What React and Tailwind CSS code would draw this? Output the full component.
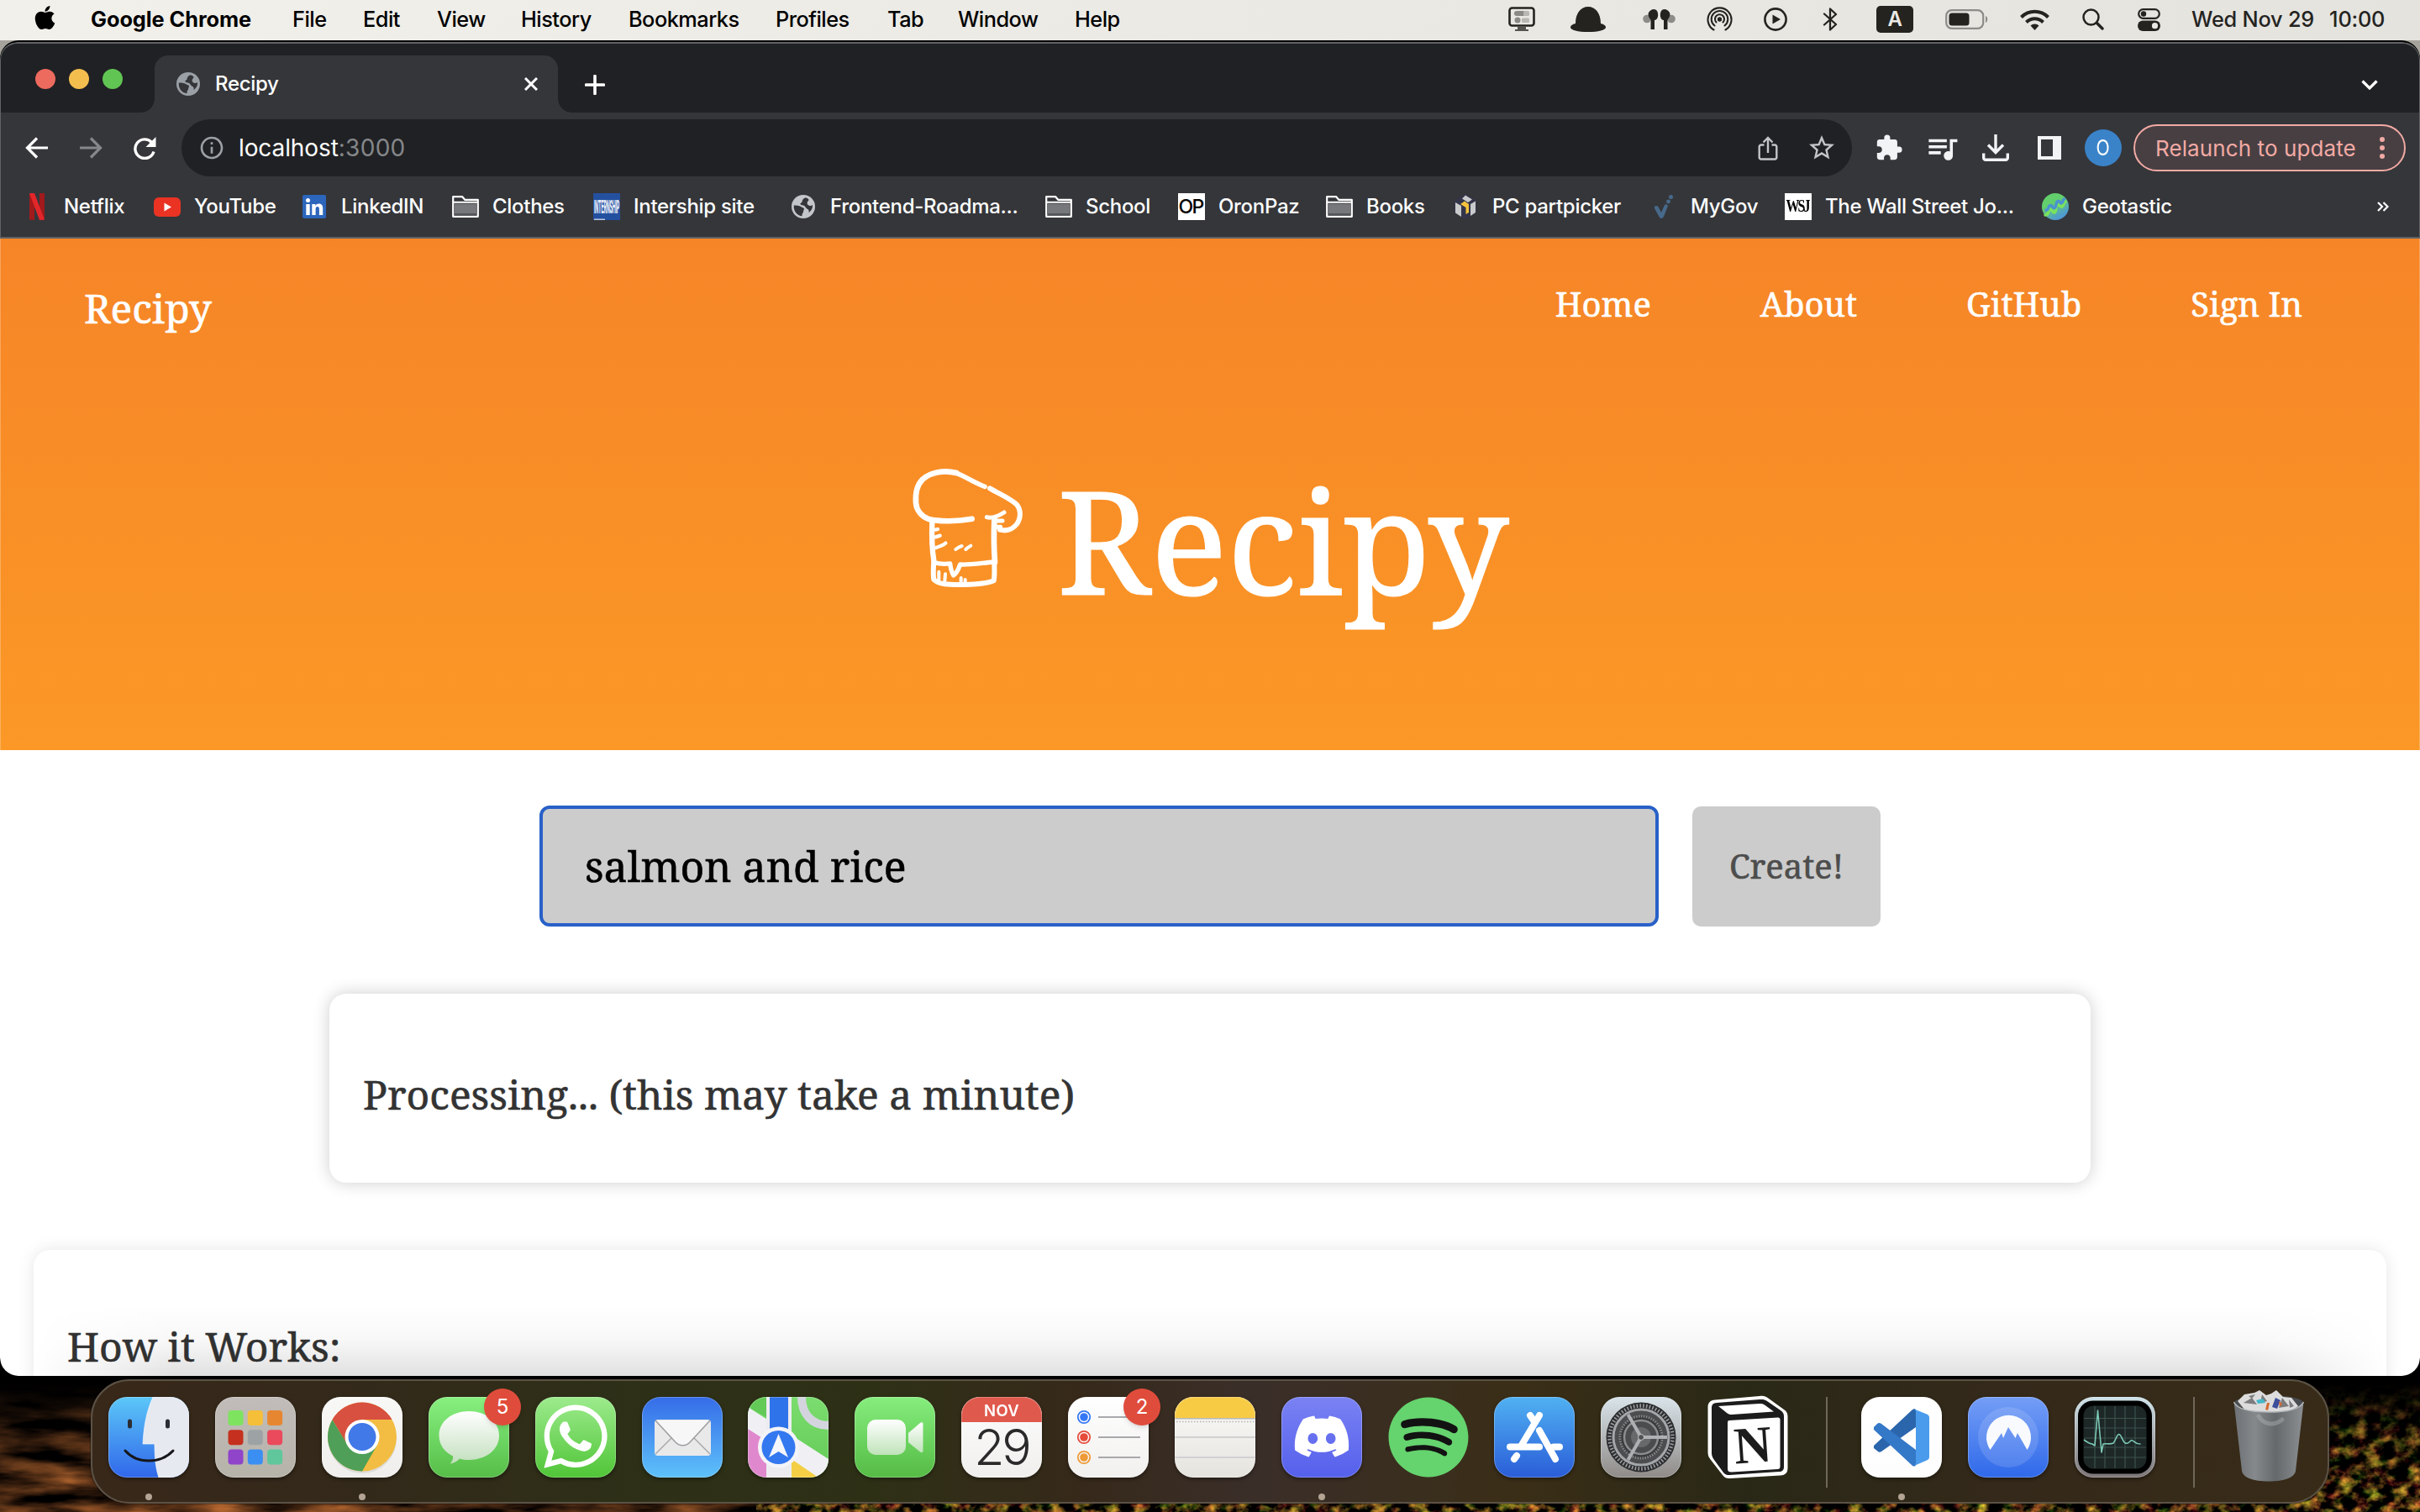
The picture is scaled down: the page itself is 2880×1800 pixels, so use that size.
import React from "react";
import { FaApple, FaWhatsapp, FaDiscord, FaSpotify } from "react-icons/fa";
import { MdExtension, MdQueueMusic, MdInfoOutline, MdStarOutline } from "react-icons/md";

const SERIF = "font-['Noto_Serif',serif]";

/* ---------- macOS menu bar ---------- */

const menus = [
  ["File", "w-[84px]"],
  ["Edit", "w-[88px]"],
  ["View", "w-[100px]"],
  ["History", "w-[128px]"],
  ["Bookmarks", "w-[175px]"],
  ["Profiles", "w-[133px]"],
  ["Tab", "w-[84px]"],
  ["Window", "w-[139px]"],
  ["Help", "w-[80px]"],
];

function StatusIcons() {
  const c = "#24231f";
  return (
    <div className="flex items-center">
      <svg className="w-8 h-[30px]" viewBox="0 0 32 30">
        <rect x="1.5" y="1.5" width="29" height="21" rx="3" fill="none" stroke={c} strokeWidth="2.6" />
        <rect x="7" y="5" width="14" height="6" rx="3" fill="#8b8a86" />
        <rect x="18" y="5" width="7" height="6" rx="1.5" fill="#b9b8b3" />
        <circle cx="11" cy="16" r="3.5" fill="#8b8a86" />
        <rect x="16" y="13.500" width="9" height="5.500" rx="1.5" fill="#b9b8b3" />
        <path d="M11 24h10v3h3v2H8v-2h3z" fill="#55544f" />
      </svg>
      <svg className="ml-[42px] w-[42px] h-[30px]" viewBox="0 0 42 30" fill={c}>
        <path d="M6 20C6 8 12 0 21 0s15 8 15 20c4 1 6 2.500 6 4.500C42 28 33 30 21 30S0 28 0 24.500C0 22.500 2 21 6 20z" />
      </svg>
      <svg className="ml-[44px] w-[39px] h-6" viewBox="0 0 39 24">
        <circle cx="5" cy="11.500" r="4.800" fill="#8d8c88" />
        <circle cx="34" cy="11.500" r="4.800" fill="#8d8c88" />
        <path d="M7 4c3-5 9-5 10.500-1s.5 10-3.500 10v11H9.500V13C8 10 5.500 8 7 4z" fill={c} />
        <path d="M32 4c-3-5-9-5-10.500-1s-.5 10 3.500 10v11h4.500V13C31 10 33.500 8 32 4z" fill={c} />
      </svg>
      <svg className="ml-[37px] w-[31px] h-[30px]" viewBox="0 0 31 30" fill="none" stroke={c} strokeWidth="2.1" strokeLinecap="round">
        <path d="M8.500 27.500a14 14 0 1 1 14 0" />
        <path d="M9.500 22.500a9.800 9.800 0 1 1 12 0" />
        <path d="M11.500 18.500a5.500 5.500 0 1 1 8 0" />
        <circle cx="15.500" cy="15" r="1.600" fill={c} />
      </svg>
      <svg className="ml-[37px] w-7 h-7" viewBox="0 0 28 28">
        <circle cx="14" cy="14" r="12.600" fill="none" stroke={c} strokeWidth="2.6" />
        <path d="M10.500 8.500v11l9.500-5.500z" fill={c} />
      </svg>
      <svg className="ml-[42px] w-[19px] h-7" viewBox="0 0 19 28" fill="none" stroke={c} strokeWidth="2.300" strokeLinejoin="round" strokeLinecap="round">
        <path d="M2 7.500l14 12.500-7 6.500v-25l7 6.500L2 20.500" />
      </svg>
      <div className="ml-[45px] w-[44px] h-8 rounded-[5px] bg-[#24231f] text-[#eceae5] text-[24px] font-semibold leading-8 text-center">A</div>
      <svg className="ml-[38px] w-[51px] h-[24px]" viewBox="0 0 51 24">
        <rect x="1.200" y="1.200" width="44" height="21.600" rx="6.500" fill="none" stroke="#8d8c88" strokeWidth="2.200" />
        <rect x="4.500" y="4.500" width="24" height="15" rx="3.500" fill={c} />
        <path d="M48 8c3 1 3 7 0 8z" fill="#8d8c88" />
      </svg>
      <svg className="ml-[38px] w-[35px] h-[25px]" viewBox="0 0 35 25" fill="none" stroke={c} strokeWidth="4">
        <path d="M1.500 9.500a22.500 22.500 0 0 1 32 0" />
        <path d="M7.500 15.500a14 14 0 0 1 20 0" />
        <path d="M17.500 25l-5-5.500a7 7 0 0 1 10 0z" fill={c} stroke="none" />
      </svg>
      <svg className="ml-[39px] w-[26px] h-[26px]" viewBox="0 0 26 26" fill="none" stroke={c} strokeLinecap="round">
        <circle cx="10.500" cy="10.500" r="9" strokeWidth="2.500" />
        <path d="M17.500 17.500l6.500 6.500" strokeWidth="3.400" />
      </svg>
      <svg className="ml-[40px] w-[27px] h-[27px]" viewBox="0 0 27 27">
        <rect x="1.200" y="1.200" width="24.600" height="10.600" rx="5.300" fill="none" stroke={c} strokeWidth="2.200" />
        <circle cx="7" cy="6.500" r="3.200" fill={c} />
        <rect x="0" y="14.500" width="27" height="12.500" rx="6.200" fill={c} />
        <circle cx="20.500" cy="20.700" r="3.600" fill="#e8e7e2" />
      </svg>
    </div>
  );
}

function MenuBar() {
  return (
    <div className="h-12 shrink-0 flex items-center bg-linear-to-r from-[#f1f0eb] to-[#e4e3de] text-[25.300px] font-medium tracking-[-0.5px] text-black pb-[2px]">
      <FaApple className="ml-[38px] w-[31px] h-[32px] -mt-[5px]" />
      <div className="ml-[39px] w-[240px] font-bold whitespace-nowrap tracking-[-0.050px]">Google Chrome</div>
      {menus.map(([m, w]) => (
        <div key={m} className={w}>{m}</div>
      ))}
      <div className="ml-auto flex items-center">
        <StatusIcons />
        <div className="ml-[37px] w-[272px] flex gap-[18px] text-[#24231f] whitespace-nowrap tracking-[-0.200px]">
          <span>Wed Nov 29</span>
          <span>10:00</span>
        </div>
      </div>
    </div>
  );
}

/* ---------- Browser chrome ---------- */

function Globe({ className, fill, bg = "#35363a" }) {
  return (
    <svg className={className} viewBox="0 0 28 28">
      <circle cx="14" cy="14" r="14" fill={fill} />
      <path d="M2.800 12.500c3 0 6 0 8.500 1.500 1 1.300 2.500.8 3.700 2.300 0 1.700-1.200 2.700-1 4.400-1 1-1.800 2.300-1.400 4.600C6.500 24.800 2 19 2.800 12.500z" fill={bg} />
      <path d="M16.500 3.200c-1.800.8-3.500 2-3.800 4 .3 2-1.900 2.100-2.500 3.600 1 2 3.500 1.400 5 2.200 1.600 1 1.800 3 3.600 3.800 1.800.5 2.200 2.500 1.700 4.500 3-2.500 5-5.500 4.500-9.300-2 1.500-4.500 1-5.800-.6-1.400-1.500-.2-3.500 1-4.600C21.500 5.500 19 3.500 16.500 3.200z" fill={bg} />
    </svg>
  );
}

function TabStrip() {
  return (
    <div className="h-[82px] flex items-center bg-[#202124]">
      <div className="ml-[41px] mt-[2px] flex gap-4">
        <div className="size-6 rounded-full bg-[#ed6a5e]" />
        <div className="size-6 rounded-full bg-[#f4be4f]" />
        <div className="size-6 rounded-full bg-[#61c554]" />
      </div>
      <div className="ml-[22px] self-end size-4 bg-[radial-gradient(circle_at_0_0,#202124_15.500px,#35363a_16px)]" />
      <div className="self-end w-[480px] h-[68px] rounded-t-[16px] bg-[#35363a] flex items-center px-[26px] text-white text-[24px] font-medium">
        <Globe className="w-7 h-7" fill="#9aa0a6" />
        <span className="ml-[18px] tracking-[-0.3px]">Recipy</span>
        <svg className="ml-auto -mr-[2px] size-4" viewBox="0 0 16 16" stroke="#fff" strokeWidth="3">
          <path d="M1 1l14 14M15 1L1 15" />
        </svg>
      </div>
      <div className="self-end size-4 bg-[radial-gradient(circle_at_100%_0,#202124_15.500px,#35363a_16px)]" />
      <svg className="ml-4 mt-[15px] size-6" viewBox="0 0 24 24" stroke="#fff" strokeWidth="3.600" strokeLinecap="round">
        <path d="M12 1.500v21M1.500 12h21" />
      </svg>
      <svg className="ml-auto mr-[49px] mt-[16px] w-[20px] h-[12px]" viewBox="0 0 20 12" fill="none" stroke="#fff" strokeWidth="3.200">
        <path d="M1.500 1.500l8.500 8.500 8.500-8.500" />
      </svg>
    </div>
  );
}

function Toolbar() {
  return (
    <div className="h-[84px] flex items-center bg-[#35363a] text-white">
      <svg className="ml-[29px] w-[27px] h-[26px]" viewBox="0 0 27 26" fill="none" stroke="#fff" strokeWidth="3.200">
        <path d="M27 13H3M14 1.500L2.500 13 14 24.500" />
      </svg>
      <svg className="ml-[38px] w-[27px] h-[26px]" viewBox="0 0 27 26" fill="none" stroke="#85878a" strokeWidth="3.200">
        <path d="M0 13h24M13 1.500L24.500 13 13 24.500" />
      </svg>
      <svg className="ml-[36px] w-[28px] h-[27px]" viewBox="0 0 28 27">
        <path d="M22.500 6.500A11.300 11.300 0 1 0 25 17.500" fill="none" stroke="#fff" strokeWidth="3.400" />
        <path d="M27.500 0v12h-12z" fill="#fff" />
      </svg>
      <div className="ml-[30px] w-[1988px] h-[68px] rounded-full bg-[#202124] flex items-center pl-[20px] pr-[18px]">
        <MdInfoOutline className="size-8 text-[#9aa0a6]" />
        <div className="ml-[16px] text-[28px] text-white whitespace-nowrap tracking-[-0.1px]">
          localhost<span className="text-[#85878a] tracking-[0.300px]">:3000</span>
        </div>
        <svg className="ml-auto w-6 h-[29px]" viewBox="0 0 24 29" fill="none" stroke="#c3c5c8" strokeWidth="2.400">
          <path d="M7.500 10.500H4A2.200 2.200 0 0 0 1.700 12.700v12.500A2.200 2.200 0 0 0 4 27.500h16a2.200 2.200 0 0 0 2.300-2.300V12.700A2.200 2.200 0 0 0 20 10.500h-3.500M12 20V3M6.500 7.500L12 2l5.500 5.500" />
        </svg>
        <MdStarOutline className="ml-[34px] size-9 text-[#c3c5c8]" />
      </div>
      <div className="ml-[27px] flex items-center text-[#f1f3f4]">
        <MdExtension className="size-[34px]" />
        <MdQueueMusic className="ml-[25px] size-[43px]" />
        <svg className="ml-[26px] w-8 h-[32px]" viewBox="0 0 32 32" fill="none" stroke="currentColor" strokeWidth="3.400">
          <path d="M16 0v21M7 12.500l9 9 9-9M1.700 22.500V28a2.300 2.300 0 0 0 2.300 2.300h24a2.300 2.300 0 0 0 2.300-2.300v-5.500" />
        </svg>
        <svg className="ml-[34px] w-[28px] h-[28px]" viewBox="0 0 28 28">
          <path d="M0 0h28v28H0zM4 4v20h14V4z" fill="currentColor" fillRule="evenodd" />
        </svg>
        <div className="ml-[28px] size-[44px] rounded-full bg-[#3a83c9] text-white text-[25px] leading-[44px] text-center"><span className="inline-block scale-x-85">O</span></div>
        <div className="ml-[14px] w-[324px] h-[56px] rounded-full border-2 border-[#f2aaa4] bg-[#483f43] text-[#f2aaa4] text-[26px] flex items-center pl-[24px]">
          <span className="whitespace-nowrap tracking-[0.100px]">Relaunch to update</span>
          <svg className="ml-auto mr-[23px] w-[6px] h-[26px]" viewBox="0 0 6 26" fill="#f2aaa4">
            <circle cx="3" cy="3" r="3" />
            <circle cx="3" cy="13" r="3" />
            <circle cx="3" cy="23" r="3" />
          </svg>
        </div>
      </div>
    </div>
  );
}

function Folder() {
  return (
    <svg className="w-8 h-[26px]" viewBox="0 0 32 26">
      <path d="M1.200 24.800V1.200h11l3 3.600h15.600v20z" fill="none" stroke="#fff" strokeWidth="2.200" strokeLinejoin="round" />
      <path d="M2 7.800h28" stroke="#fff" strokeWidth="2" />
      <path d="M3 9.500h26v12H3z" fill="#77787b" />
      <path d="M3 21.500h26v2H3z" fill="#55565a" />
    </svg>
  );
}

const bookmarkIcons = {
  netflix: (
    <svg className="w-[20px] h-8" viewBox="0 0 20 32">
      <path d="M1 0h6v32l-6-.5z" fill="#a11a1c" />
      <path d="M13 0h6v31.500L13 32z" fill="#a11a1c" />
      <path d="M1 0h6l12 31.500L13 32z" fill="#e3262a" />
    </svg>
  ),
  youtube: (
    <svg className="w-8 h-[23px]" viewBox="0 0 32 23">
      <rect width="32" height="23" rx="6" fill="#ea3323" />
      <path d="M12.500 6.500v10l8.500-5z" fill="#fff" />
    </svg>
  ),
  linkedin: (
    <svg className="w-7 h-7" viewBox="0 0 28 28">
      <rect width="28" height="28" rx="2" fill="#2c66bc" />
      <circle cx="6.500" cy="6.500" r="2.500" fill="#fff" />
      <path d="M4.300 11h4.400v13H4.300zM11.300 11h4v2c1-1.600 2.500-2.400 4.300-2.400 3.300 0 4.600 2.200 4.600 5.700V24h-4.300v-7c0-1.800-.6-2.900-2-2.900-1.600 0-2.300 1.200-2.300 3V24h-4.300z" fill="#fff" />
    </svg>
  ),
  folder: <Folder />,
  internship: (
    <svg className="w-8 h-8" viewBox="0 0 32 32">
      <rect width="32" height="32" fill="#2450a0" />
      <text x="16" y="10.200" transform="scale(1 2.400)" textAnchor="middle" textLength="30" lengthAdjust="spacingAndGlyphs" fontFamily="Inter" fontWeight="800" fontSize="9" fill="#e6ecf7">INTERNSHIP</text>
      <rect x="1" y="30.500" width="13" height="1.500" fill="#b9c8e4" />
    </svg>
  ),
  globe: <Globe className="w-7 h-7" fill="#c3c7cb" />,
  op: <div className="w-8 h-8 bg-white text-black text-[23px] leading-8 tracking-[-1.800px] text-center"><span className="-ml-[2px]">OP</span></div>,
  pc: (
    <svg className="w-[28px] h-[30px]" viewBox="0 0 28 30">
      <path d="M14 0l13 8v14l-13 8-13-8V8z" fill="#34354a" />
      <path d="M2 10l7 4v13l-7-4.500zM14 1.500l8 5-5 3.500-7-4.500zM20 12l6-3.500V22l-6 4z" fill="#c9cacb" />
      <path d="M8 12l5-3.500 5 3.500v10l-3.500 2v-8z" fill="#f3c33c" />
    </svg>
  ),
  mygov: (
    <svg className="w-6 h-7" viewBox="0 0 24 28" fill="#47698a">
      <path d="M1 14c2-2 4-1 5 1l3 6 4-9c1-1 3-1 4 1l-5 13c-1.500 2.500-4.500 2.500-5.500 0L1 16z" />
      <circle cx="17.500" cy="8" r="2.400" />
      <circle cx="20.500" cy="2.500" r="2.500" />
    </svg>
  ),
  wsj: (
    <div className="w-8 h-8 bg-white text-black font-['Liberation_Serif',serif] font-bold text-[16px] leading-8 tracking-[-2px] text-center">
      <span className="inline-block scale-y-125 -ml-[2px]">WSJ</span>
    </div>
  ),
  geo: (
    <svg className="w-8 h-8" viewBox="0 0 32 32">
      <defs>
        <linearGradient id="geo" x1="0.200" y1="0" x2="0.800" y2="1"><stop offset="0.350" stopColor="#62cf6c" /><stop offset="0.850" stopColor="#4f9bd0" /></linearGradient>
      </defs>
      <circle cx="16" cy="16" r="16" fill="url(#geo)" />
      <path d="M4 26c5 0 3-6 6-7s2 5 5 4 0-9 4-9 2 3 5 2 1-5 4-6" fill="none" stroke="#7be35c" strokeWidth="3.500" strokeLinecap="round" />
      <path d="M5 20c4 0 2-5 5-5.500s2 4 5 3 1-8 4.500-8 1.500 3 4 2 1-3.500 3-4.500" fill="none" stroke="#4a93cf" strokeWidth="3.500" strokeLinecap="round" />
    </svg>
  ),
};

const bookmarks = [
  ["netflix", "Netflix", "w-[155px]"],
  ["youtube", "YouTube", "w-[175px]"],
  ["linkedin", "LinkedIN", "w-[180px]"],
  ["folder", "Clothes", "w-[168px]"],
  ["internship", "Intership site", "w-[234px]"],
  ["globe", "Frontend-Roadma...", "w-[304px]"],
  ["folder", "School", "w-[158px]"],
  ["op", "OronPaz", "w-[176px]"],
  ["folder", "Books", "w-[150px]"],
  ["pc", "PC partpicker", "w-[236px]"],
  ["mygov", "MyGov", "w-[160px]"],
  ["wsj", "The Wall Street Jo...", "w-[306px]"],
  ["geo", "Geotastic", "w-[200px]"],
];

function BookmarksBar() {
  return (
    <div className="h-[66px] pb-[8px] flex items-center bg-[#35363a] border-b-2 border-[#5f6165] box-border pl-[27px] text-white text-[24px] font-medium tracking-[-0.300px]">
      {bookmarks.map(([icon, name, w]) => (
        <div key={name} className={`${w} shrink-0 flex items-center`}>
          <div className="w-8 h-8 flex items-center justify-center shrink-0">{bookmarkIcons[icon]}</div>
          <span className="ml-4 whitespace-nowrap">{name}</span>
        </div>
      ))}
      <svg className="ml-auto mr-[36px] w-[14px] h-[12px]" viewBox="0 0 14 12" fill="none" stroke="#fff" strokeWidth="2.200">
        <path d="M1 1l5 5-5 5M7.500 1l5 5-5 5" />
      </svg>
    </div>
  );
}

/* ---------- Web page ---------- */

function ChefHat() {
  return (
    <svg className="w-[160px] h-[180px]" viewBox="0 0 480 540" fill="none" stroke="#fff" strokeLinecap="round" strokeLinejoin="round">
      <path d="M205 69C160 58 112 66 84 92 60 116 58 150 60 176c2 26 20 48 46 58 40 10 105 8 154 -1" strokeWidth="20" />
      <path d="M200 68c35 12 65 35 106 50" strokeWidth="17" />
      <path d="M324 124c30 18 73 36 96 58 16 20 15 50 0 70-16 20-35 26-60 20" strokeWidth="18" />
      <path d="M313 227c15 4 35 0 62-17" strokeWidth="15" />
      <path d="M347 240h22M347 262h15" strokeWidth="15" />
      <path d="M118 246c-2 45-1 90 6 136" strokeWidth="19" />
      <path d="M340 236c-2 50-2 100 2 152" strokeWidth="20" />
      <path d="M130 272l8-2M130 298l16-5M132 336c12-4 24-8 34-16" strokeWidth="13" />
      <path d="M202 342c8-6 14-10 22-12M238 342c6-6 12-10 18-13" strokeWidth="12" />
      <path d="M124 384c-2 28-3 50 0 66 20 20 60 18 110 18 45-1 80-4 104-14 4-20 2-40 2-66" strokeWidth="18" />
      <path d="M130 390c18 6 32 4 52 3 2 16 4 28 12 42 12-8 18-22 24-39 40 2 80-6 120-9" strokeWidth="16" />
      <path d="M142 422v28M165 430l-2 24M221 444v14M236 450v8" strokeWidth="12" />
    </svg>
  );
}

function Hero() {
  return (
    <div className="h-[609px] shrink-0 bg-linear-to-b from-[#f68527] to-[#fb9826] border-x border-white/25 text-white">
      <div className="h-[160px] flex items-center justify-between pl-[99px] pr-[139px]">
        <div className="mt-[5px] text-[48px] leading-none">Recipy</div>
        <nav className="mb-[5px] flex gap-[130px] text-[40px] leading-none">
          <a>Home</a>
          <a>About</a>
          <a>GitHub</a>
          <a>Sign In</a>
        </nav>
      </div>
      <div className="pt-[96px] pl-[1069px] flex items-start">
        <ChefHat />
        <h1 className="ml-[28px] mt-[17px] text-[170px] leading-[170px] [-webkit-text-stroke:1.200px]">Recipy</h1>
      </div>
    </div>
  );
}

function Page() {
  return (
    <div className={`${SERIF} flex-1 flex flex-col bg-white overflow-hidden relative [-webkit-text-stroke:0.600px]`}>
      <Hero />
      <div className="mt-[66px] pl-[642px] flex items-center gap-[40px]">
        <div className="w-[1332px] h-[144px] rounded-[12px] border-4 border-[#2860c8] bg-[#ccc] flex items-center pl-[50px] text-[50px] leading-none text-black">
          salmon and rice
        </div>
        <div className="w-[224px] h-[143px] rounded-[10px] bg-[#ccc] flex items-center justify-center text-[40px] leading-none text-[#4d4d4d]">
          Create!
        </div>
      </div>
      <div className="mt-[80px] ml-[392px] w-[2096px] h-[225px] shrink-0 rounded-[20px] bg-white shadow-[0_0_20px_rgba(0,0,0,0.200)] pt-[96px] pl-[40px] text-[48px] leading-none text-[#333]">
        Processing... (this may take a minute)
      </div>
      <div className="mt-[80px] mx-[40px] h-[300px] shrink-0 rounded-[20px] bg-white shadow-[0_0_20px_rgba(0,0,0,0.100)] pt-[91px] pl-[40px] text-[48px] leading-none text-[#333]">
        How it Works:
      </div>
      <div className="absolute bottom-0 left-[40px] right-[40px] h-[84px] bg-linear-to-b from-black/0 via-black/3 to-black/12 mask-x-from-94% mask-x-to-100%" />
    </div>
  );
}

/* ---------- Dock ---------- */

function Grad({ id, from, to }) {
  return (
    <linearGradient id={id} x1="0" y1="0" x2="0" y2="1">
      <stop offset="0" stopColor={from} />
      <stop offset="1" stopColor={to} />
    </linearGradient>
  );
}

function Tile({ id, from, to, children }) {
  return (
    <svg className="size-24 drop-shadow-[0_2px_2px_rgba(0,0,0,0.400)]" viewBox="0 0 96 96">
      <defs>
        <Grad id={id} from={from} to={to} />
        <clipPath id={`${id}-clip`}><rect width="96" height="96" rx="22" /></clipPath>
      </defs>
      <g clipPath={`url(#${id}-clip)`}>
        <rect width="96" height="96" fill={`url(#${id})`} />
        {children}
      </g>
      <rect x="0.500" y="0.500" width="95" height="95" rx="21.500" fill="none" stroke="#fff" strokeOpacity="0.250" />
    </svg>
  );
}

const Finder = () => (
  <Tile id="finder" from="#5cc7f8" to="#3067ea">
    <path d="M53 0C45 18 42 36 41 56h14c0 16 1 28 5 40h36V0z" fill="#e6e9f0" />
    <path d="M53 0C45 18 42 36 41 56h14c0 16 1 28 5 40" fill="none" stroke="#fff" strokeWidth="1" opacity="0.600" />
    <path d="M25.500 29v6M70.500 29v6" stroke="#2c2d33" strokeWidth="5" strokeLinecap="round" />
    <path d="M20 64c14 16 42 16 57 0" fill="none" stroke="#16171b" strokeWidth="3" strokeLinecap="round" />
  </Tile>
);

const Launchpad = () => {
  const colors = ["#7ee35f", "#f6bf3a", "#e78631", "#c5301f", "#9da3a5", "#ea4a5c", "#8f44c9", "#3b8ff2", "#5fc79b"];
  return (
    <Tile id="launch" from="#c1bcb9" to="#b6b3a9">
      {colors.map((c, i) => (
        <rect key={c} x={15.500 + (i % 3) * 23.300} y={16 + Math.floor(i / 3) * 23.300} width="18" height="18" rx="4" fill={c} />
      ))}
    </Tile>
  );
};

const Chrome = () => (
  <Tile id="chrome" from="#f8f8f7" to="#efeeec">
    <circle cx="48" cy="50" r="41" fill="#000" opacity="0.080" />
    <circle cx="48" cy="47.500" r="41" fill="#f2bd42" />
    <path d="M48 27h35.500A41 41 0 0 0 12.500 27L30.500 57z" fill="#d8503f" />
    <path d="M12.500 27A41 41 0 0 0 48 88.500L65.500 58 48 62 30.500 57z" fill="#4f9f58" />
    <circle cx="48" cy="47.500" r="20.500" fill="#fff" />
    <circle cx="48" cy="47.500" r="16.500" fill="#4179e8" />
  </Tile>
);

const Messages = () => (
  <Tile id="msg" from="#87f07f" to="#56bd48">
    <defs><Grad id="msgb" from="#fff" to="#c3dfbe" /></defs>
    <path d="M48 17c20 0 36 12 36 29S68 75 48 75c-4 0-8-.5-11-1.500-3 3-7 5.500-11.500 6 3-3 4-6 3.500-9C18 65 12.500 56 12.500 46 12.500 29 28 17 48 17z" fill="url(#msgb)" />
  </Tile>
);

const WhatsApp = () => (
  <Tile id="wa" from="#9deb8d" to="#50c537">
    <foreignObject x="5" y="4" width="86" height="86"><FaWhatsapp className="size-[86px] text-white" /></foreignObject>
  </Tile>
);

const Mail = () => (
  <Tile id="mail" from="#356ce8" to="#5ec2fa">
    <rect x="15" y="27" width="67" height="43" rx="4" fill="#e9e9ea" />
    <path d="M16 68l20-20M81 68L61 48" stroke="#a9a9ab" strokeWidth="1.500" />
    <path d="M16 28l24 26c5 5 12 5 17 0l24-26" fill="#f7f7f7" stroke="#9d9da0" strokeWidth="1.500" />
  </Tile>
);

const Maps = () => (
  <Tile id="maps" from="#7bdd6f" to="#62c955">
    <path d="M0 0h22v24L0 12z" fill="#63c957" />
    <path d="M0 12l96 62v22H80L0 40z" fill="#f0f0f4" />
    <path d="M0 38l22 14v44H0z" fill="#e088cd" />
    <path d="M52 74l32 22H52z" fill="#f4cf45" />
    <path d="M64 0c0 20 12 34 32 34" fill="none" stroke="#d4d4df" strokeWidth="10" />
    <rect x="22" width="30" height="96" fill="#ececf0" />
    <rect x="26" width="22" height="50" fill="#2f73ea" />
    <circle cx="36.500" cy="60" r="24.500" fill="#f3f4f8" />
    <circle cx="36.500" cy="60" r="20" fill="#3478f0" />
    <path d="M36.500 44l11.500 28-11.500-7-11.500 7z" fill="#f4f6fb" />
  </Tile>
);

const FaceTime = () => (
  <Tile id="ft" from="#86ee7e" to="#55bb45">
    <defs><Grad id="ftb" from="#fff" to="#bfe3b9" /></defs>
    <rect x="15" y="27" width="46" height="42" rx="10" fill="url(#ftb)" />
    <path d="M64 43l14-12c2-1.500 3.500-1 3.500 1v32c0 2-1.500 3-3.500 1.500L64 54z" fill="url(#ftb)" />
  </Tile>
);

const Calendar = () => (
  <Tile id="cal" from="#fdfdfd" to="#f0efed">
    <rect width="96" height="30" fill="#e0594d" />
    <text x="48" y="22.800" textAnchor="middle" fontFamily="Inter" fontWeight="600" fontSize="18.500" letterSpacing="0.300" fill="#fff">NOV</text>
    <text x="48" y="81" textAnchor="middle" fontFamily="Inter" fontWeight="300" fontSize="59" letterSpacing="-3" fill="#2a2a2b">29</text>
  </Tile>
);

const Reminders = () => (
  <Tile id="rem" from="#ffffff" to="#f1f0ee">
    {["#3478f6", "#e74b3b", "#ee9a37"].map((c, i) => (
      <g key={c}>
        <circle cx="19" cy={24 + i * 24} r="7.200" fill="none" stroke={c} strokeWidth="1.800" />
        <circle cx="19" cy={24 + i * 24} r="4.800" fill={c} />
        <path d={`M36 ${24 + i * 24}h50`} stroke="#a9a8ac" strokeWidth="2" />
      </g>
    ))}
  </Tile>
);

const Notes = () => (
  <Tile id="notes" from="#fbfbfa" to="#e5e3dd">
    <rect width="96" height="25" fill="#f8cb45" />
    <rect y="25" width="96" height="1.500" fill="#b9b8b8" />
    <path d="M2 29.500h94" stroke="#b5b4b4" strokeWidth="1.500" strokeDasharray="1.500 2" />
    <path d="M0 48h96M0 72h96" stroke="#d2d1d2" strokeWidth="1.800" />
  </Tile>
);

const Discord = () => (
  <Tile id="disc" from="#7a82f3" to="#5560ec">
    <foreignObject x="13" y="12" width="74" height="74"><FaDiscord className="size-[70px] text-white" /></foreignObject>
  </Tile>
);

const Spotify = () => (
  <div className="relative size-24 flex items-center justify-center">
    <div className="absolute size-[80px] rounded-full bg-[#121212]" />
    <FaSpotify className="relative size-[98px] shrink-0 text-[#65d36e]" />
  </div>
);

const AppStore = () => (
  <Tile id="store" from="#50b1f2" to="#2a5dd8">
    <g stroke="#fff" strokeWidth="8" strokeLinecap="round">
      <path d="M54 22L33 57M43 22l4 6" />
      <path d="M19 59.500h35M71 59.500h7" />
      <path d="M54 40l19 34M27 70l-3 4" />
    </g>
  </Tile>
);

const Settings = () => (
  <Tile id="set" from="#d9e4ea" to="#8f8b88">
    <circle cx="48" cy="48" r="41.500" fill="#2c2d2f" />
    <circle cx="48" cy="48" r="37.500" fill="none" stroke="#9a9d9f" strokeWidth="4.500" strokeDasharray="1.600 2.200" />
    <circle cx="48" cy="48" r="33" fill="#4c4d4f" stroke="#a4a7a9" strokeWidth="3" />
    <circle cx="48" cy="48" r="25" fill="#3a3b3d" stroke="#858688" strokeWidth="3" strokeDasharray="1.500 1.500" />
    <circle cx="48" cy="48" r="20" fill="#4b4c4e" stroke="#8b8d8f" strokeWidth="2.500" />
    <circle cx="48" cy="48" r="12" fill="#68696b" />
    <path d="M48 48h31M48 48L32.500 21M48 48L32.500 75" stroke="#aeb1b3" strokeWidth="4" />
    <circle cx="48" cy="48" r="3.500" fill="#505153" stroke="#c4c7c9" />
  </Tile>
);

const Notion = () => (
  <svg className="w-[97px] h-[100px] -mt-[2px]" viewBox="0 0 97 100">
    <path d="M9 5.500L62 1c5-.5 7 0 11 3l18 13c4 3 4.500 5 4.500 9v60c0 6-2 9-9 9.500L27 99c-4 .3-6-.5-9-4L4 77c-3-4-3.500-6-3.500-10V14c0-5 3-8 8.500-8.500z" fill="#fff" />
    <path d="M11 9L62 5c4-.3 6 0 9 2l16 11c3 2 4 4 4 7v60c0 4-2 6-6 6l-59 4c-3 0-5-.5-7-3L8 77c-2-3-3-5-3-8V15c0-4 2-5.700 6-6z" fill="#1c1c1d" />
    <path d="M13 13l49-3c3 0 4 0 6 1.500l11 8L29 23c-3 0-4-.5-6-2z" fill="#fff" />
    <path d="M26 30l58-3.500c1.500 0 2.500 1 2.500 2.500v56c0 2-1 3-3 3l-55 3.500c-3 0-4.500-1-4.500-4V33c0-2 .5-3 2-3z" fill="#fff" />
    <text x="54" y="80" transform="rotate(-4 54 60)" textAnchor="middle" fontFamily="Liberation Serif" fontWeight="700" fontSize="62" fill="#1c1c1d">N</text>
  </svg>
);

const VSCode = () => (
  <Tile id="vsc" from="#ffffff" to="#fdfdfd">
    <path d="M15 58l45-42c2-2 4-2 5-1v21L24 65c-1.500 1-3 1-4 0l-5-4z" fill="#2b66ad" />
    <path d="M15 36l4-4c1.500-1.300 3-1.300 5 0l41 31v18c-1 2-3 2-5 0L15 39z" fill="#3478c8" />
    <path d="M63 14.500l15 6c2 1 3 2 3 4v47c0 2-1 3-3 4l-15 6.500c1.500-1 2-2 2-4V19c0-2-.5-3.500-2-4.500z" fill="#4a9bec" />
  </Tile>
);

const NordVPN = () => (
  <Tile id="nord" from="#749ef6" to="#2f69ea">
    <circle cx="48" cy="48" r="36" fill="#fff" opacity="0.130" />
    <path d="M26.500 63A26.500 26.500 0 1 1 70.500 63L59 43l-2.500 6L48 36l-6 13-2-6z" fill="#f8fafe" />
  </Tile>
);

const Activity = () => (
  <Tile id="act" from="#cfe3ea" to="#7d7577">
    <rect x="4" y="4.500" width="88" height="87" rx="18" fill="#000" />
    <rect x="10.500" y="10.500" width="75" height="75" rx="12" fill="#1d2726" />
    <path d="M11 25.500h74M11 37h74M11 49h74M11 60h74M11 72h74M24 11v74M36 11v74M48 11v74M60 11v74M72 11v74" stroke="#3c534d" strokeWidth="1.200" />
    <path d="M11 51c4 3 7 5 10 5l3 2 3.500-42L32 66l2-10c3-1 8 1 12-1 3-3 4-10 6.500-10.500 3 0 4 7 7 10 3 2 5 0 8-3 3 0 4 5 11 4.500" fill="none" stroke="#7cc8b5" strokeWidth="1.600" strokeLinejoin="round" />
  </Tile>
);

const Trash = () => (
  <svg className="w-[84px] h-[110px] -mt-[9px]" viewBox="0 0 84 110">
    <defs>
      <linearGradient id="bin" x1="0" x2="1"><stop offset="0" stopColor="#6d7175" /><stop offset="0.300" stopColor="#85898c" /><stop offset="0.600" stopColor="#65696c" /><stop offset="1" stopColor="#8c9093" /></linearGradient>
    </defs>
    <ellipse cx="42" cy="16" rx="41" ry="9" fill="#4a4d50" />
    <path d="M5 14l8-8 12-2 6-3 8 6 6-2 6-4 8 8 10 1 8 10-14 10H18z" fill="#dcdcdc" />
    <path d="M12 16l10-6 6 8zM58 10l8 10-12 2zM34 6l6 8-8 2zM66 12l6 8-5 2zM18 8l8-2-4 5z" fill="#7c7c7e" />
    <path d="M27 13l8-2 3 5-9 1z" fill="#45b6c9" />
    <path d="M50 10l6 3-4 10-6-2z" fill="#3c4f9b" />
    <path d="M40 16l3 0-2 9-3-1zM54 14l4 3-3 4z" fill="#d66a2e" />
    <path d="M0.500 15c4 9 20 12 41.500 12s37-3 41.500-12L74 97c-1 8-14 12.500-32 12.500S11 105 10 97z" fill="url(#bin)" />
    <path d="M0.500 15c4 9 20 12 41.500 12s37-3 41.500-12" fill="none" stroke="#b3b7ba" strokeWidth="1.500" />
    <path d="M30 32c6 10 18 12 28 4" stroke="#b5b8ba" strokeWidth="5" opacity="0.400" fill="none" strokeLinecap="round" />
  </svg>
);

const apps = [
  { name: "finder", Icon: Finder, open: true },
  { name: "launchpad", Icon: Launchpad },
  { name: "chrome", Icon: Chrome, open: true },
  { name: "messages", Icon: Messages, badge: 5 },
  { name: "whatsapp", Icon: WhatsApp },
  { name: "mail", Icon: Mail },
  { name: "maps", Icon: Maps },
  { name: "facetime", Icon: FaceTime },
  { name: "calendar", Icon: Calendar },
  { name: "reminders", Icon: Reminders, badge: 2 },
  { name: "notes", Icon: Notes },
  { name: "discord", Icon: Discord, open: true },
  { name: "spotify", Icon: Spotify },
  { name: "appstore", Icon: AppStore },
  { name: "settings", Icon: Settings },
  { name: "notion", Icon: Notion },
];

const recents = [
  { name: "vscode", Icon: VSCode, open: true },
  { name: "nordvpn", Icon: NordVPN },
  { name: "activity", Icon: Activity },
];

function DockItem({ Icon, open, badge }) {
  return (
    <div className="w-[126.850px] shrink-0 flex flex-col items-center">
      <div className="relative h-24">
        <Icon />
        {badge && (
          <div className="absolute -top-[10px] -right-[14px] size-[44px] rounded-full bg-[#e04c3c] text-white text-[24px] leading-[44px] text-center shadow-md">{badge}</div>
        )}
      </div>
      {open && <div className="mt-[19px] size-2 rounded-full bg-[#b3a493]" />}
    </div>
  );
}

function Wallpaper() {
  return (
    <svg className="absolute inset-0 w-[2880px] h-[190px]" viewBox="0 0 2880 190" preserveAspectRatio="none">
      <defs>
        <filter id="wood" x="0" y="0" width="100%" height="100%" colorInterpolationFilters="sRGB">
          <feTurbulence type="fractalNoise" baseFrequency="0.010 0.050" numOctaves="4" seed="4" />
          <feColorMatrix values="1.300 0 0 0 -0.350  0.750 0 0 0 -0.210  0.350 0 0 0 -0.100  0 0 0 0 1" />
        </filter>
        <filter id="leaves" x="0" y="0" width="100%" height="100%" colorInterpolationFilters="sRGB">
          <feTurbulence type="fractalNoise" baseFrequency="0.060 0.080" numOctaves="4" seed="9" />
          <feColorMatrix values="2.200 0 0 0 -0.900  1.500 0.500 0 0 -0.860  0.500 0 0 0 -0.210  0 0 0 0 1" />
        </filter>
        <linearGradient id="fade" x1="0" y1="0" x2="0" y2="1">
          <stop offset="0.200" stopColor="#000" />
          <stop offset="0.550" stopColor="#000" stopOpacity="0.300" />
          <stop offset="1" stopColor="#000" stopOpacity="0" />
        </linearGradient>
      </defs>
      <rect width="900" height="190" filter="url(#wood)" />
      <rect x="900" width="1980" height="190" filter="url(#leaves)" />
      <rect width="2880" height="190" fill="url(#fade)" />
    </svg>
  );
}

function Dock() {
  return (
    <div className="relative w-[2664px] h-[148px] ml-[108px] rounded-[46px] border-2 border-[#5b5245] bg-[linear-gradient(90deg,#38281a_0%,#33291a_12%,#2d3017_25%,#2e3016_35%,#36291a_44%,#3a2e29_52%,#3a2e17_64%,#292816_74%,#34291a_85%,#382b18_100%)] flex pt-[19px] pl-[4px] shadow-[0_0_2px_#000]">
      {apps.map((a) => <DockItem key={a.name} {...a} />)}
      <div className="ml-[29px] w-[2px] h-[108px] bg-[#6f675a]" />
      <div className="ml-[25px] flex">
        {recents.map((a) => <DockItem key={a.name} {...a} />)}
      </div>
      <div className="ml-[30px] w-[2px] h-[108px] bg-[#6f675a]" />
      <div className="ml-[25px]"><DockItem Icon={Trash} /></div>
    </div>
  );
}

export default function App() {
  return (
    <div className="relative w-[2880px] h-[1800px] overflow-hidden flex flex-col bg-[#a5a39b] font-[Inter,sans-serif]">
      <MenuBar />
      <div className="relative z-10 h-[1590px] shrink-0 pt-[2px] flex flex-col rounded-[22px] overflow-hidden bg-black">
        <div className="flex-1 flex flex-col rounded-[21px] overflow-hidden">
          <div className="shrink-0 border-t-2 border-x border-[#606266] rounded-t-[21px] overflow-hidden bg-[#606266]">
            <TabStrip />
            <Toolbar />
            <BookmarksBar />
          </div>
          <Page />
        </div>
      </div>
      <div className="relative -mt-[28px] h-[190px] shrink-0 bg-black pt-[32px]">
        <Wallpaper />
        <Dock />
      </div>
    </div>
  );
}
